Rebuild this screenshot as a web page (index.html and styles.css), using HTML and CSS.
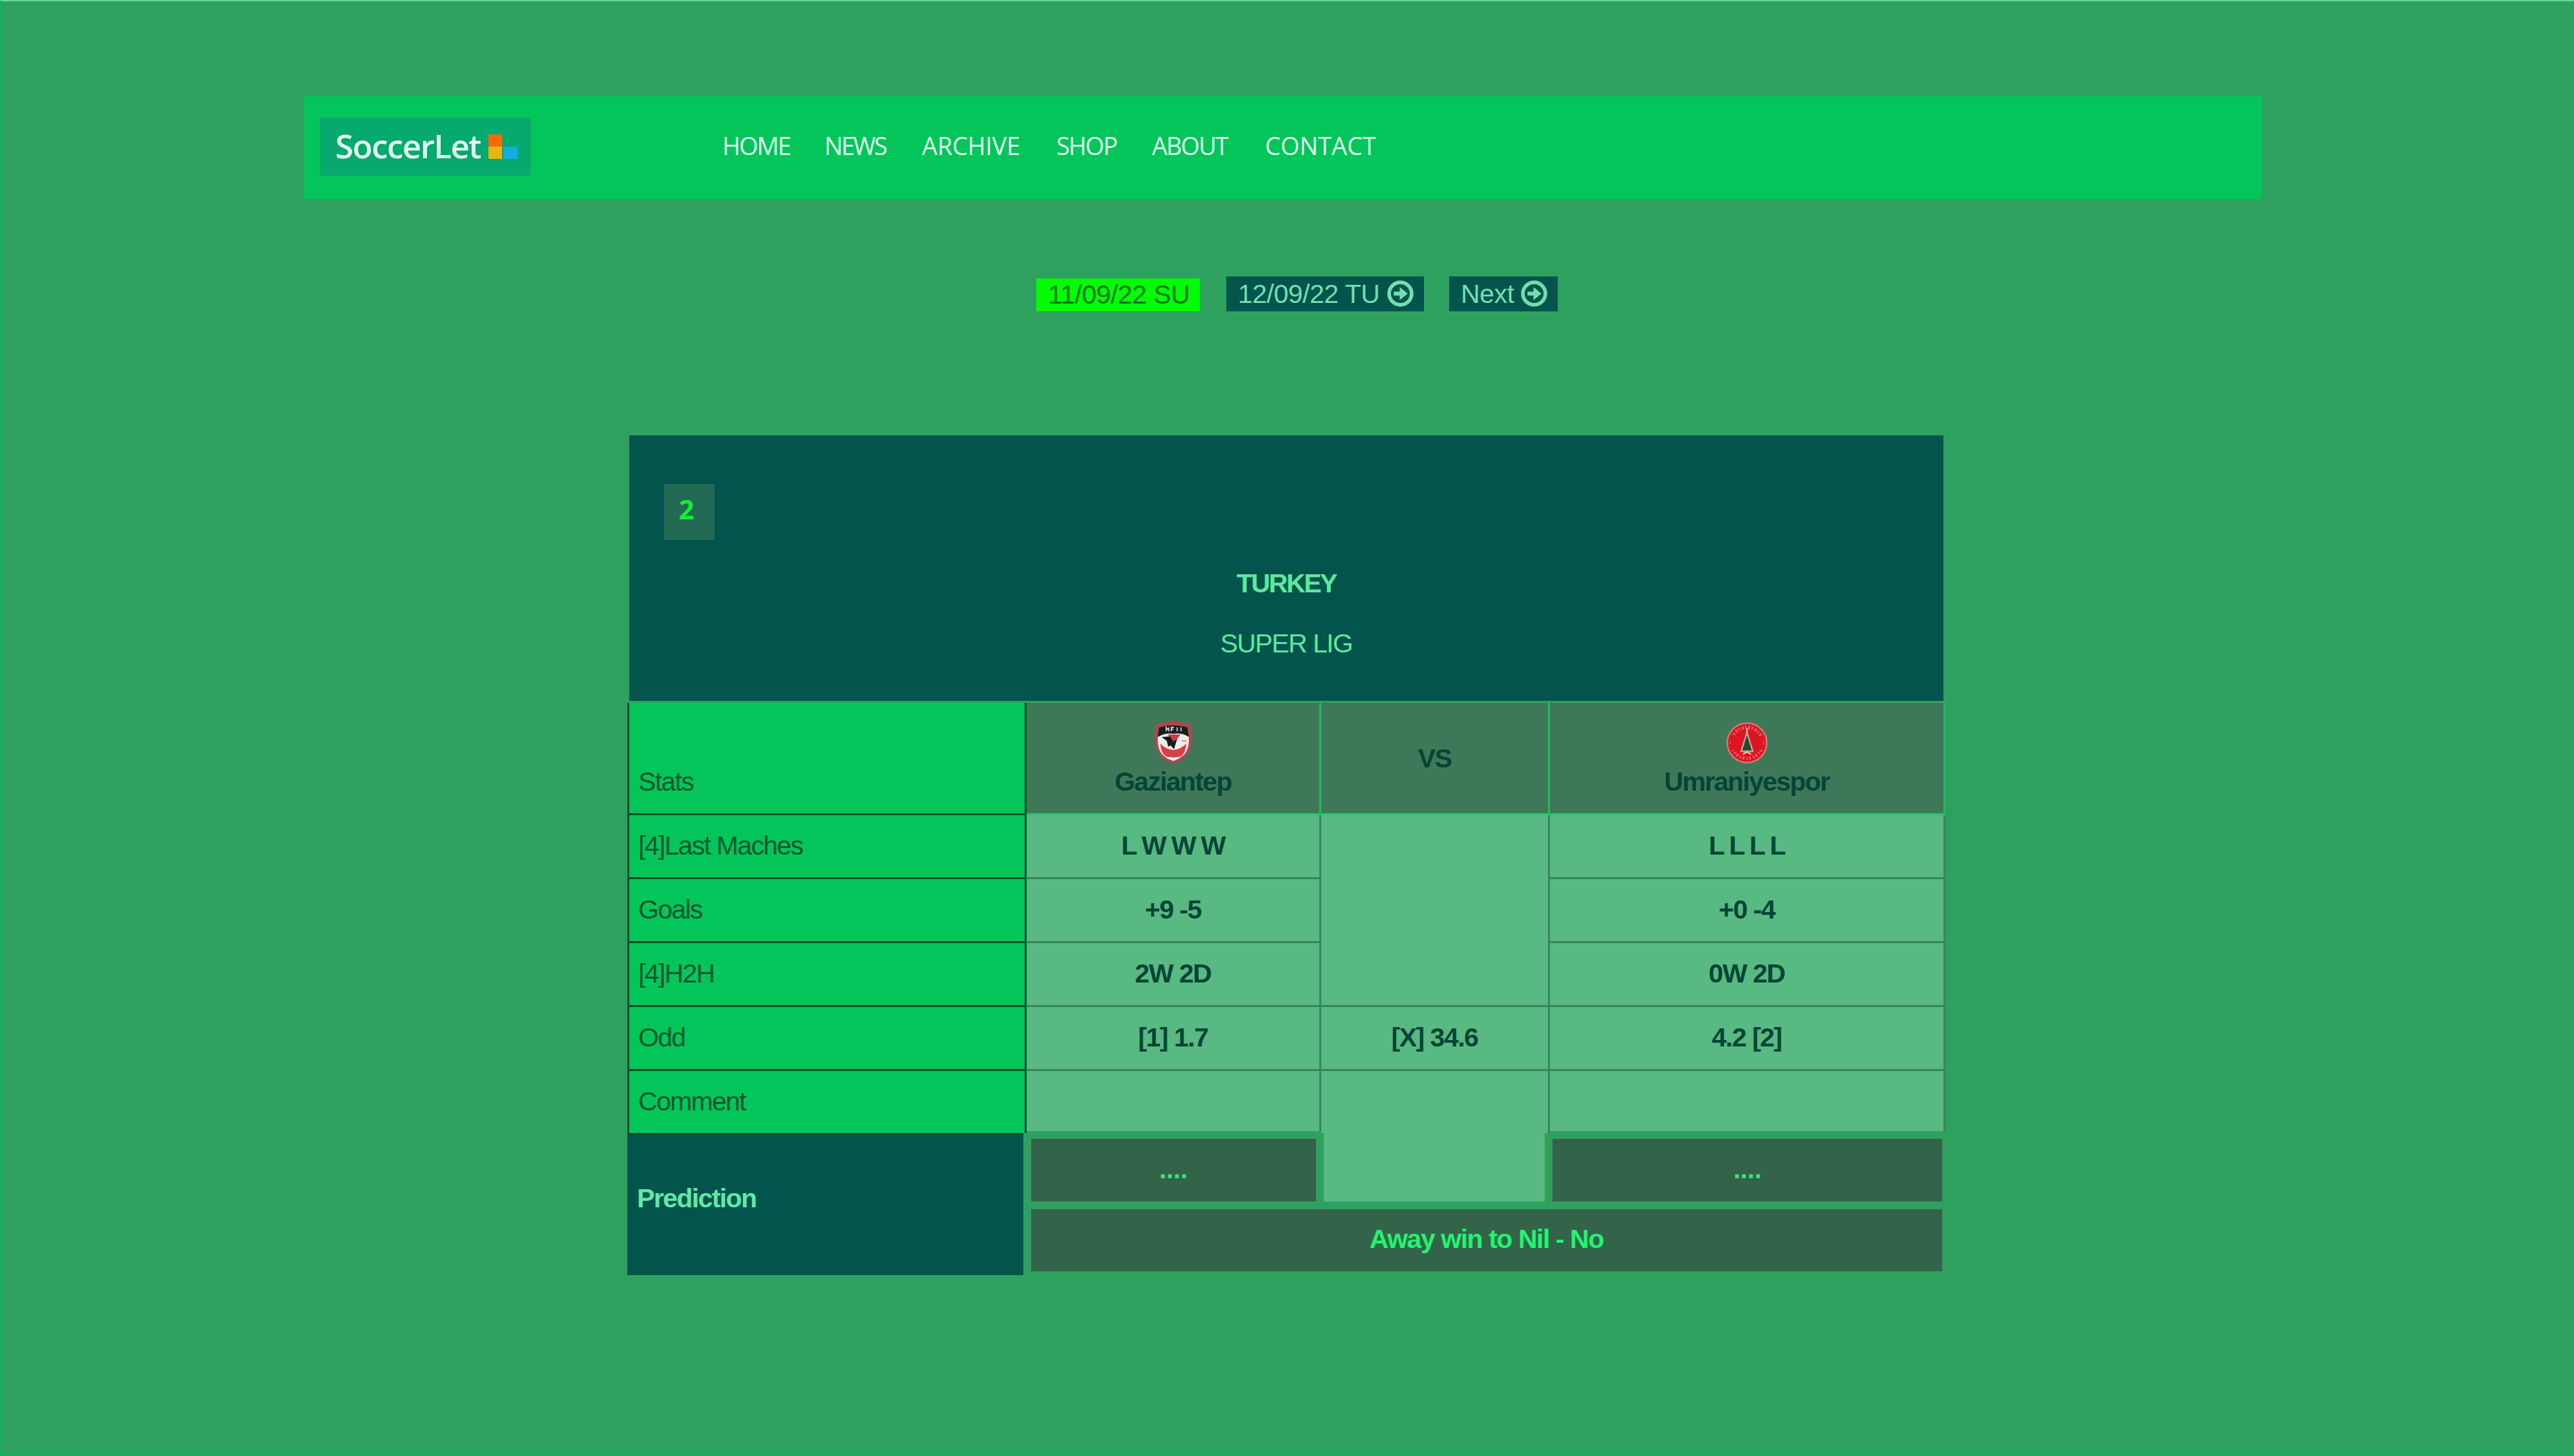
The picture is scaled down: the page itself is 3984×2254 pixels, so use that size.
FILE: index.html
```html
<!DOCTYPE html>
<html lang="en">
<head>
<meta charset="utf-8">
<title>SoccerLet</title>
<link rel="stylesheet" href="styles.css">
</head>
<body>
<div class="page">
  <header class="topbar">
    <a class="logo">
      <span class="logo-text">SoccerLet</span>
      <svg class="logo-mark" viewBox="0 0 45 38">
        <rect width="21" height="19" fill="#f76b06"/>
        <rect y="19" width="21" height="19" fill="#e6b80c"/>
        <rect x="23" y="19" width="22" height="19" fill="#12aede"/>
      </svg>
    </a>
    <nav class="menu">
      <a class="tight">HOME</a>
      <a class="tighter">NEWS</a>
      <a>ARCHIVE</a>
      <a class="tight">SHOP</a>
      <a class="tight">ABOUT</a>
      <a class="loose">CONTACT</a>
    </nav>
  </header>

  <div class="dates">
    <a class="date active">11/09/22 SU</a>
    <a class="date">12/09/22 TU
      <svg class="arrow" viewBox="0 0 40 40"><circle cx="20" cy="20" r="17" fill="none" stroke="currentColor" stroke-width="5.5"/><path d="M10 17h9v-7l12 10-12 10v-7h-9z" fill="currentColor"/></svg></a>
    <a class="date">Next
      <svg class="arrow" viewBox="0 0 40 40"><circle cx="20" cy="20" r="17" fill="none" stroke="currentColor" stroke-width="5.5"/><path d="M10 17h9v-7l12 10-12 10v-7h-9z" fill="currentColor"/></svg></a>
  </div>

  <main class="match">
    <section class="league">
      <span class="badge">2</span>
      <h1 class="country">TURKEY</h1>
      <h2 class="division">SUPER LIG</h2>
    </section>

    <section class="stats">
      <div class="label head">Stats</div>
      <div class="team head">
        <svg class="crest" viewBox="0 0 64 70">
          <path d="M5 7Q18 5 32 1Q46 5 59 7Q62 22 60 40Q55 60 32 69Q9 60 4 40Q2 22 5 7Z" fill="#a94a50"/>
          <path d="M10 12Q32 6 54 12L56 26L8 26Z" fill="#1b1d20"/>
          <path d="M8 27Q20 20 32 22Q46 20 56 27Q57 45 49 54Q41 61 32 64Q22 61 15 54Q7 45 8 27Z" fill="#f4ecec"/>
          <path d="M12 37Q20 46 32 47Q44 46 52 37Q52 50 44 57Q32 60 20 57Q12 50 12 37Z" fill="#d8404a"/>
          <path d="M23 23L43 23L34 36Z" fill="#cf3b45"/>
          <path d="M14 27L27 26L32 34L38 30L33 46L28 40L24 42L22 33Z" fill="#17191c"/>
          <path d="M21 18v-6l4 5v-5M29 18v-6h4M29 15h3M38 12v6M44 12v6" fill="none" stroke="#c9cfcc" stroke-width="1.8"/>
          <path d="M45 33h7" stroke="#9a9fa0" stroke-width="2"/>
        </svg>
        <span>Gaziantep</span>
      </div>
      <div class="team head"><span class="vs">VS</span></div>
      <div class="team head">
        <svg class="crest" viewBox="0 0 64 70">
          <circle cx="32" cy="36" r="30.5" fill="#dc1524" stroke="#cf7a72" stroke-width="2.5"/>
          <circle cx="32" cy="36" r="24" fill="none" stroke="#ec8a86" stroke-width="5" stroke-dasharray="3 2.4 1.8 3.2" stroke-opacity=".65"/>
          <path d="M12 25V47M52 25V47" stroke="#dc1524" stroke-width="10"/>
          <path d="M32 20L41 49H23Z" fill="#1d4a34" stroke="#d89a86" stroke-width="2.5"/>
          <path d="M32 13v8M26 54q6-7 12 0" fill="none" stroke="#f0b4ac" stroke-width="2.5"/>
        </svg>
        <span>Umraniyespor</span>
      </div>

      <div class="label">[4]Last Maches</div>
      <div class="cell wide">L W W W</div>
      <div class="cell middle"></div>
      <div class="cell wide">L L L L</div>

      <div class="label">Goals</div>
      <div class="cell">+9 -5</div>
      <div class="cell">+0 -4</div>

      <div class="label">[4]H2H</div>
      <div class="cell">2W 2D</div>
      <div class="cell">0W 2D</div>

      <div class="label">Odd</div>
      <div class="cell">[1] 1.7</div>
      <div class="cell">[X] 34.6</div>
      <div class="cell">4.2 [2]</div>

      <div class="label last">Comment</div>
      <div class="cell last"></div>
      <div class="cell last open"></div>
      <div class="cell last"></div>
    </section>

    <section class="prediction">
      <div class="prediction-label">Prediction</div>
      <div class="pick dots">....</div>
      <div class="filler"></div>
      <div class="pick dots">....</div>
      <div class="pick result">Away win to Nil - No</div>
    </section>
  </main>
</div>
</body>
</html>
```
FILE: styles.css
```css
* { box-sizing: border-box; }

body {
  margin: 0;
  background: #2fa15f;
  font-family: "Liberation Sans", Arial, sans-serif;
  font-size: 41px;
  line-height: 47px;
}

.page {
  height: 2254px;
  padding: 147px 0 0 468px;
  border: 2px solid #0cb462;
  border-top-color: #62dc9c;
}

.topbar {
  display: flex;
  width: 3031px;
  height: 159px;
  padding: 33px 0 0 25px;
  background: #04c55a;
}

.logo {
  display: flex;
  align-items: center;
  justify-content: space-between;
  width: 326px;
  height: 90px;
  padding: 0 20px 0 24px;
  background: #06a96e;
}

.logo-text {
  margin-top: -4px;
  color: #e2fff4;
  font: 600 51px/70px "Open Sans", sans-serif;
  letter-spacing: -1.5px;
}

.logo-mark { width: 45px; height: 38px; }

.menu {
  display: grid;
  grid-template-columns: 158px 151px 208px 148px 175px auto;
  align-items: center;
  height: 86px;
  margin-left: 297px;
  color: #e0fff0;
  font: 500 38px/52px "Open Sans", sans-serif;
}

.menu a { letter-spacing: -.3px; }
.menu .tight { letter-spacing: -2px; }
.menu .tighter { letter-spacing: -2.6px; }
.menu .loose { letter-spacing: 0; }

.dates {
  display: flex;
  align-items: flex-end;
  gap: 41px;
  height: 174px;
  margin-left: 1134px;
}

.date {
  display: flex;
  align-items: center;
  justify-content: space-between;
  width: 306px;
  height: 54px;
  padding: 0 16px 0 18px;
  background: #02544c;
  color: #70dfae;
  letter-spacing: -.5px;
  white-space: nowrap;
}

.date:last-child {
  width: 168px;
  margin-left: -2px;
}

.date.active {
  width: 253px;
  height: 51px;
  background: #00ff00;
  color: #067518;
}

.arrow { width: 41px; height: 41px; margin-top: -2px; }

.match {
  width: 2040px;
  margin: 192px 0 0 501px;
}

.league {
  display: flex;
  flex-direction: column;
  align-items: center;
  width: 2034px;
  height: 411px;
  margin: 0 3px 3px;
  padding: 75px 54px 0;
  background: #02544c;
  color: #5ce99d;
}

.badge {
  align-self: flex-start;
  width: 78px;
  height: 87px;
  padding-right: 9px;
  background: #236a55;
  color: #12f02c;
  font: bold 42px/78px "Open Sans", sans-serif;
  text-align: center;
}

.country, .division {
  margin: 0;
  font-size: 41px;
  line-height: 47px;
}

.country {
  margin-top: 44px;
  letter-spacing: -2.4px;
}

.division {
  margin-top: 46px;
  font-weight: normal;
  letter-spacing: -1.6px;
}

.stats {
  display: grid;
  grid-template-columns: 618px 456px 354px 612px;
  grid-template-rows: 174px 99px 99px 99px 99px 96px;
}

.label {
  display: flex;
  align-items: center;
  padding: 0 0 2px 14px;
  border: solid #05502a;
  border-width: 0 3px 3px;
  background: #04c55a;
  color: #04592b;
  letter-spacing: -1.7px;
}

.label.head {
  align-items: flex-end;
  padding-bottom: 25px;
}

.team {
  display: flex;
  flex-direction: column;
  align-items: center;
  justify-content: flex-end;
  gap: 3px;
  padding-bottom: 25px;
  border-right: 3px solid #1fbb62;
  border-bottom: 3px solid #30c46e;
  background: #3f7858;
  color: #034538;
  font-weight: bold;
  letter-spacing: -1.7px;
}

.vs { margin-bottom: 36px; }

.crest { width: 64px; height: 70px; }

.cell {
  display: flex;
  align-items: center;
  justify-content: center;
  padding-bottom: 2px;
  border: solid #36855a;
  border-width: 0 3px 3px 0;
  background: #58b982;
  color: #034536;
  font-weight: bold;
  letter-spacing: -1.5px;
}

.cell.wide { letter-spacing: -2.1px; }
.cell.middle { grid-row: 2 / 5; grid-column: 3; }
.last { border-bottom: 0; }
.cell.last { margin-bottom: 3px; }
.cell.open { margin-bottom: 0; }

.prediction {
  display: grid;
  grid-template-columns: 612.5px 441px 342.5px 603px;
  grid-template-rows: 106px 95.5px;
  column-gap: 12px;
  row-gap: 12px;
  height: 220px;
}

.prediction-label {
  display: flex;
  grid-row: 1 / 3;
  align-items: center;
  height: 220px;
  padding: 0 0 20px 15px;
  border-top: 3px solid #05502a;
  background: #02544c;
  color: #5feaa6;
  font-weight: bold;
  letter-spacing: -1.6px;
}

.pick {
  display: flex;
  align-items: center;
  justify-content: center;
  padding-bottom: 2px;
  background: #336449;
  color: #20f56e;
  font-weight: bold;
  letter-spacing: -1.45px;
}

.dots {
  margin-top: 9px;
  color: #3de07a;
  letter-spacing: -.5px;
}

.filler { background: #58b982; }
.result { grid-column: 2 / 5; }
```
